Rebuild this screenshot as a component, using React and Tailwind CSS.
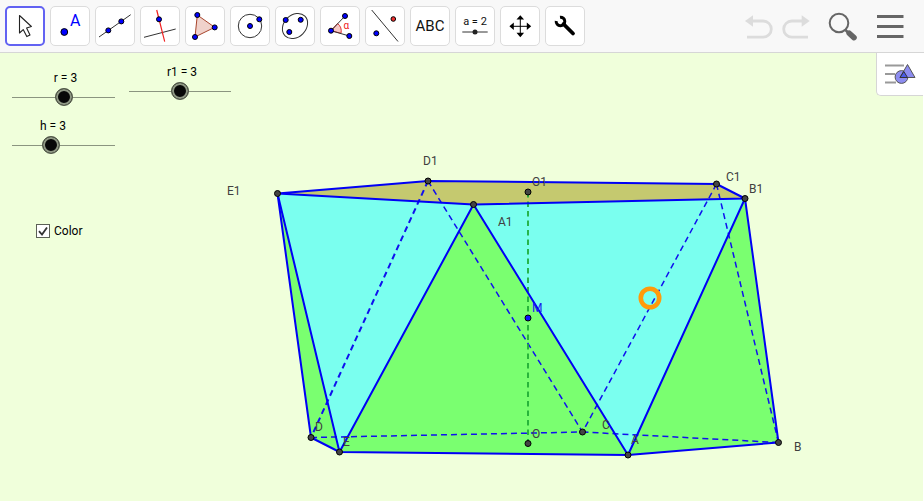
import { useState } from "react";

const BLUE = "#0000ff";
const INK = "#333333";

function Dot({ x, y, r = 2.5, fill = BLUE }) {
  return <circle cx={x} cy={y} r={r} fill={fill} stroke="#000" strokeWidth="1" />;
}

const TOOLS = [
  {
    name: "Move",
    icon: (
      <path
        d="M14.5 9.5V27L18.2 23.6L21.8 30.6L25 29L21.6 22L26.4 20.5Z"
        fill="#fff"
        stroke="#222"
        strokeWidth="1.1"
        strokeLinejoin="round"
      />
    ),
  },
  {
    name: "Point",
    icon: (
      <>
        <Dot x={14.3} y={26} r={3.4} />
        <text x="20" y="20" fontSize="16" fill="#0000ff">A</text>
      </>
    ),
  },
  {
    name: "Line",
    icon: (
      <>
        <path d="M4 31L35.7 8.7" stroke={INK} />
        <Dot x={13.3} y={24.4} />
        <Dot x={26.3} y={15.4} />
      </>
    ),
  },
  {
    name: "Perpendicular line",
    icon: (
      <>
        <path d="M4 31.3L35.7 23" stroke={INK} />
        <path d="M16.7 4L24.7 35.7" stroke="#f02020" strokeWidth="1.2" />
        <Dot x={19} y={13.3} />
      </>
    ),
  },
  {
    name: "Polygon",
    icon: (
      <>
        <path d="M12.3 9L29.7 21.3L10 31Z" fill="#f0d2cb" stroke="#a8452c" />
        <Dot x={12.3} y={9} />
        <Dot x={29.7} y={21.4} />
        <Dot x={10} y={31} />
      </>
    ),
  },
  {
    name: "Circle with centre through point",
    icon: (
      <>
        <circle cx="20" cy="20" r="11.7" fill="none" stroke={INK} />
        <Dot x={20} y={20} />
        <Dot x={29.3} y={13.3} />
      </>
    ),
  },
  {
    name: "Ellipse",
    icon: (
      <>
        <ellipse cx="20" cy="20" rx="14" ry="11" fill="none" stroke={INK} transform="rotate(-45 20 20)" />
        <Dot x={10.7} y={14} />
        <Dot x={25.7} y={13.8} />
        <Dot x={14.3} y={26} />
      </>
    ),
  },
  {
    name: "Angle",
    icon: (
      <>
        <path d="M11 24.7L17.6 17.5A10 10 0 0 1 21 27.3Z" fill="#f7c9c6" stroke="#e03030" />
        <path d="M25 10L11 24.7L29.3 30" fill="none" stroke={INK} />
        <text x="23.5" y="23" fontSize="10" fill="#f02020">α</text>
        <Dot x={25} y={10} />
        <Dot x={11} y={24.7} />
        <Dot x={29.3} y={30} />
      </>
    ),
  },
  {
    name: "Reflect about line",
    icon: (
      <>
        <path d="M6.7 4L33 35.5" stroke={INK} />
        <Dot x={28.3} y={13} r={2.3} fill="#f03030" />
        <Dot x={11.3} y={27.3} />
      </>
    ),
  },
  {
    name: "Text",
    icon: <text x="20" y="25" fontSize="15" textAnchor="middle" fill="#111">ABC</text>,
  },
  {
    name: "Slider",
    icon: (
      <>
        <text x="20" y="19" fontSize="11" textAnchor="middle" fill="#111">a = 2</text>
        <path d="M7.3 26H32.7" stroke={INK} />
        <circle cx="20" cy="26" r="2.5" fill="#222" />
      </>
    ),
  },
  {
    name: "Move graphics view",
    icon: (
      <>
        <path d="M20.3 11V29M11 20.3H29.5" stroke="#000" strokeWidth="1" />
        <path d="M20.3 9.2l3.8 4.4h-7.6zM20.3 31.2l3.8-4.4h-7.6zM9.4 20.3l4.4-3.8v7.6zM31.2 20.3l-4.4-3.8v7.6z" fill="#000" />
      </>
    ),
  },
  {
    name: "Custom tool",
    icon: (
      <g fill="none" stroke="#000">
        <path d="M18.5 18L28 27.5" strokeWidth="3.8" strokeLinecap="round" />
        <path d="M15 11.2A4.3 4.3 0 1 1 11.2 15" strokeWidth="3" />
      </g>
    ),
  },
];

function ToolButton({ tool, selected, onSelect }) {
  return (
    <button
      type="button"
      aria-label={tool.name}
      aria-pressed={selected}
      onClick={onSelect}
      className={
        selected
          ? "flex size-10 shrink-0 items-center justify-center rounded-[5px] border-2 border-[#6262f2] bg-white"
          : "flex size-10 shrink-0 items-center justify-center rounded-[5px] border border-[#dcdcdc] bg-white"
      }
    >
      <svg viewBox="2 2 36 36" className="size-9 shrink-0" fontFamily="Roboto, sans-serif">
        {tool.icon}
      </svg>
    </button>
  );
}

function Toolbar() {
  const [active, setActive] = useState(0);
  return (
    <header className="flex h-[53px] shrink-0 items-start justify-between border-b border-[#d6d6d6] bg-[#f8f8f8] pt-[6px] pr-5 pl-[5px]">
      <div className="flex gap-[5px]">
        {TOOLS.map((tool, i) => (
          <ToolButton key={tool.name} tool={tool} selected={i === active} onSelect={() => setActive(i)} />
        ))}
      </div>
      <div className="flex h-10 items-center">
        <button type="button" aria-label="Undo" className="w-9">
          <svg viewBox="0 0 36 40" className="h-10 w-9" fill="none">
            <path d="M9 15H21.2A8.1 8.1 0 0 1 21.2 31.2H5" stroke="#dcdcdc" strokeWidth="2.8" />
            <path d="M3 15L11 9.3V20.7Z" fill="#dcdcdc" />
          </svg>
        </button>
        <button type="button" aria-label="Redo" className="w-9">
          <svg viewBox="0 0 36 40" className="h-10 w-9" fill="none">
            <path d="M26 15H13.8A8.1 8.1 0 0 0 13.8 31.2H30" stroke="#dcdcdc" strokeWidth="2.8" />
            <path d="M31.7 15L23.7 9.3V20.7Z" fill="#dcdcdc" />
          </svg>
        </button>
        <button type="button" aria-label="Search" className="mr-4 ml-[14px] w-8">
          <svg viewBox="0 0 32 40" className="h-10 w-8" fill="none" stroke="#666">
            <circle cx="11" cy="17" r="9.3" strokeWidth="2" />
            <path d="M17.5 24L21 27.5" strokeWidth="2.5" />
            <path d="M21.2 27.2L26 31.6" strokeWidth="5.6" strokeLinecap="round" />
          </svg>
        </button>
        <button type="button" aria-label="Menu" className="w-7">
          <svg viewBox="0 0 28 40" className="h-10 w-7" stroke="#666" strokeWidth="3">
            <path d="M1 10.5H27.5M1 20.5H27.5M1 30.5H27.5" />
          </svg>
        </button>
      </div>
    </header>
  );
}

function ValueSlider({ name, max, className }) {
  const [value, setValue] = useState(3);
  return (
    <div className={className}>
      <label htmlFor={"slider-" + name} className="block leading-4">
        {name} = {value}
      </label>
      <div className="mt-[2px] flex h-[18px] items-center bg-[linear-gradient(#8b9580,#8b9580)] bg-[length:100%_1px] bg-center bg-no-repeat">
        <input
          id={"slider-" + name}
          type="range"
          min="0"
          max={max}
          value={value}
          onChange={(e) => setValue(Number(e.target.value))}
          className="-mx-[9px] h-[18px] min-w-0 flex-1 appearance-none bg-transparent [&::-webkit-slider-thumb]:size-[18px] [&::-webkit-slider-thumb]:appearance-none [&::-webkit-slider-thumb]:rounded-full [&::-webkit-slider-thumb]:border [&::-webkit-slider-thumb]:border-[#555c4c] [&::-webkit-slider-thumb]:bg-[#080808] [&::-webkit-slider-thumb]:shadow-[inset_0_0_0_2px_#8f9884]"
        />
      </div>
    </div>
  );
}

function Controls({ color, onColor }) {
  return (
    <div className="relative col-start-1 row-start-1 w-60 justify-self-start self-start pt-[11px] pl-3 text-xs text-black">
      <div className="flex gap-[14px]">
        <ValueSlider name="r" max={6} className="w-[103px] pt-[6px] text-center indent-1" />
        <ValueSlider name="r1" max={6} className="w-[102px] text-center indent-1" />
      </div>
      <ValueSlider name="h" max={8} className="mt-3 w-[103px] text-left indent-7" />
      <label className="mt-[69px] ml-6 flex w-fit items-center gap-1 leading-4">
        <span className="grid">
          <input
            type="checkbox"
            checked={color}
            onChange={(e) => onColor(e.target.checked)}
            className="peer col-start-1 row-start-1 size-[14px] appearance-none border border-[#5c6156] bg-white"
          />
          <svg viewBox="0 0 14 14" className="pointer-events-none invisible col-start-1 row-start-1 size-[14px] peer-checked:visible">
            <path d="M3 7.2L6 10.5L11 3.5" fill="none" stroke="#333" strokeWidth="1.8" />
          </svg>
        </span>
        Color
      </label>
    </div>
  );
}

const P = {
  E1: [277.5, 193.5],
  D1: [428, 181],
  C1: [716.5, 184],
  B1: [745, 198.5],
  A1: [473.5, 204.5],
  D: [311, 437.5],
  E: [339.5, 452],
  A: [628, 455],
  B: [778.5, 442.5],
  C: [582.5, 432],
  O: [528, 443.5],
  O1: [528, 192],
};

const LABELS = [
  ["D1", 423, 165],
  ["E1", 227, 195],
  ["A1", 498, 226],
  ["O1", 532, 186],
  ["C1", 726, 181],
  ["B1", 749, 193],
  ["D", 315, 431],
  ["E", 343, 446],
  ["O", 532, 438],
  ["C", 602, 429],
  ["A", 631, 444],
  ["B", 794, 451],
];

const pts = (...names) => names.map((n) => P[n].join(",")).join(" ");

function Solid({ color }) {
  return (
    <svg
      role="img"
      aria-label="Solid with bases ABCDE and A1B1C1D1E1"
      className="col-start-1 row-start-1 h-full min-h-[448px] w-full"
      fontFamily="Roboto, sans-serif"
      fontSize="12"
    >
      <g transform="translate(0 -53)">
        {color && (
          <g>
            <polygon points={pts("E1", "D1", "C1", "B1", "A1")} fill="#c5c96f" />
            <polygon points={pts("E1", "A1", "E")} fill="#7affef" />
            <polygon points={pts("A1", "B1", "A")} fill="#7affef" />
            <polygon points={pts("E1", "D", "E")} fill="#7aff70" />
            <polygon points={pts("A1", "E", "A")} fill="#7aff70" />
            <polygon points={pts("B1", "A", "B")} fill="#7aff70" />
          </g>
        )}
        <g fill="none" stroke="#1010ee" strokeWidth="1.5" strokeDasharray="6 4">
          <polyline points={pts("D1", "D")} strokeWidth="2" />
          <polyline points={pts("D1", "C")} />
          <polyline points={pts("C1", "C")} />
          <polyline points={pts("C1", "B")} />
          <polyline points={pts("D", "C")} />
          <polyline points={pts("C", "B")} />
        </g>
        <polyline points={pts("O1", "O")} stroke="#19a832" strokeWidth="1.7" strokeDasharray="5.5 4" />
        <g fill="none" stroke="#0000f5" strokeWidth="2" strokeLinejoin="round">
          <polygon points={pts("E1", "D1", "C1", "B1", "A1")} />
          <polyline points={pts("E1", "D", "E", "A", "B", "B1")} />
          <polyline points={pts("E1", "E", "A1", "A", "B1")} />
        </g>
        <g fill="#444444" stroke="#000" strokeWidth="1">
          {Object.entries(P).map(([name, [x, y]]) => (
            <circle key={name} cx={x} cy={y} r="3" />
          ))}
        </g>
        <circle cx="528" cy="318" r="3" fill="#1010ff" stroke="#000" />
        <circle cx="650" cy="298" r="9.2" fill="none" stroke="#ff9a0a" strokeWidth="4.6" />
        <g fill="#404040">
          {LABELS.map(([t, x, y]) => (
            <text key={t} x={x} y={y}>{t}</text>
          ))}
        </g>
        <text x="532" y="312" fill="#1a1aee">M</text>
      </g>
    </svg>
  );
}

function StyleBarButton() {
  return (
    <button
      type="button"
      aria-label="Graphics settings"
      className="relative col-start-1 row-start-1 flex h-[43px] w-[47px] items-center justify-center self-start justify-self-end rounded-bl-[5px] border-b border-l border-[#d6d6d6] bg-white"
    >
      <svg viewBox="0 0 32 24" className="h-6 w-8">
        <path d="M1 3.5H20M1 12H11M1 20.5H12" stroke="#999" strokeWidth="2" />
        <circle cx="17.5" cy="15" r="6.4" fill="#8c8cf0" stroke="#555" />
        <path d="M23.5 2.5L31 15.5H16Z" fill="#8c8cf0" stroke="#555" />
        <path d="M19.8 9.5L23.5 15.5H16Z" fill="#4a5be8" stroke="#333" />
      </svg>
    </button>
  );
}

export default function App() {
  const [color, setColor] = useState(true);
  return (
    <div className="flex min-h-screen flex-col bg-white pb-[2px] font-[Roboto,sans-serif]">
      <Toolbar />
      <main className="mr-px grid flex-1 grid-cols-1 bg-[#f0ffdb]">
        <Solid color={color} />
        <Controls color={color} onColor={setColor} />
        <StyleBarButton />
      </main>
    </div>
  );
}
